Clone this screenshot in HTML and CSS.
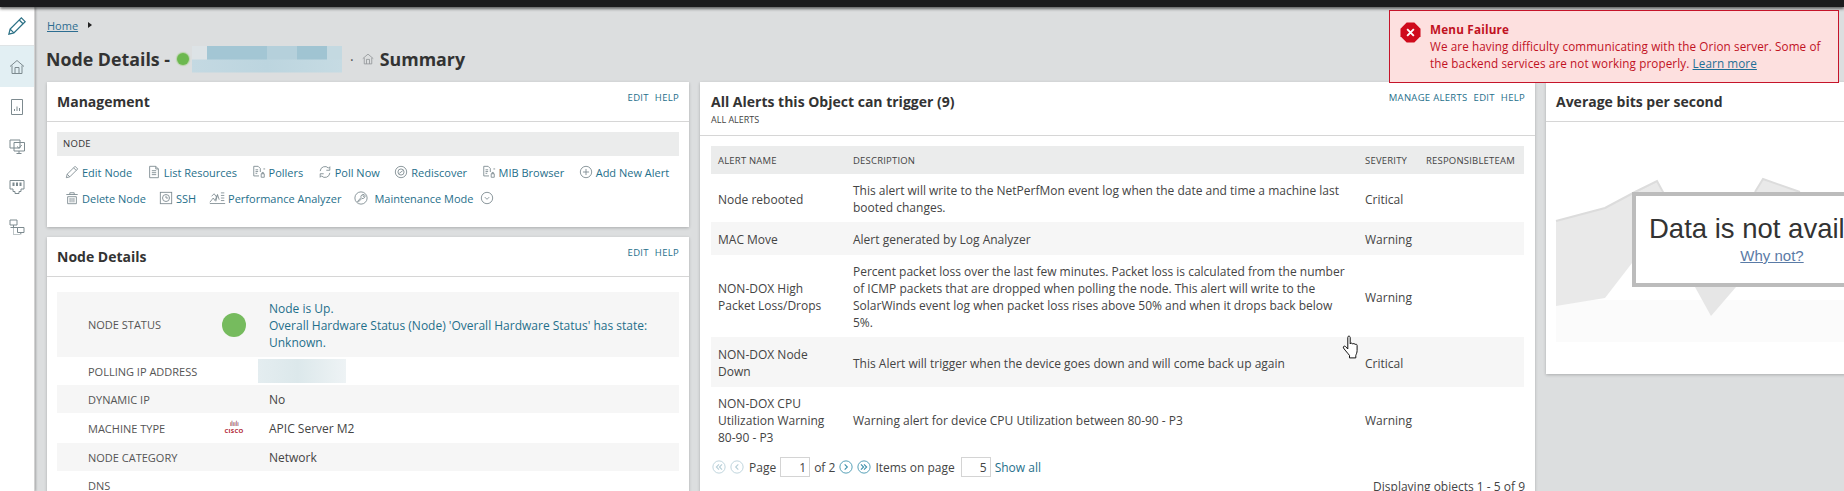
FILE: index.html
```html
<!DOCTYPE html>
<html lang="en">
<head>
<meta charset="utf-8">
<title>Node Details - Summary</title>
<link rel="stylesheet" href="styles.css">
</head>
<body>
<svg class="defs" width="0" height="0" aria-hidden="true">
  <symbol id="i-pencil" viewBox="0 0 16 16"><path d="M1.500 14.500l1-4L11.500 1.500l3 3-9 9z M9.800 3.200l3 3 M2.500 10.500l3 3" fill="none" stroke="currentColor"/></symbol>
  <symbol id="i-list" viewBox="0 0 16 16"><path d="M3 1.500h7l3 3v10H3z M5.500 6.500h5 M5.500 8.800h5 M5.500 11h5 M10 1.500v3h3" fill="none" stroke="currentColor"/></symbol>
  <symbol id="i-poller" viewBox="0 0 16 16"><path d="M8 12.500H2V1.500h5l2.500 2.500v4 M4 5.500h3 M4 7.500h3 M4 9.500h2 M10.500 10h3.500v4h-3.500z M11.500 10V8.500h1.500V10 M13 4.500h2" fill="none" stroke="currentColor"/></symbol>
  <symbol id="i-refresh" viewBox="0 0 16 16"><path d="M2.500 7A5.500 5.500 0 0 1 12 3.500L13.500 2v4h-4 M13.500 9A5.500 5.500 0 0 1 4 12.500L2.500 14v-4h4" fill="none" stroke="currentColor"/></symbol>
  <symbol id="i-disc" viewBox="0 0 16 16"><circle cx="8" cy="8" r="6.500" fill="none" stroke="currentColor"/><circle cx="8" cy="8" r="3.500" fill="none" stroke="currentColor"/><path d="M6 9.500l4-3" stroke="currentColor"/></symbol>
  <symbol id="i-plus" viewBox="0 0 16 16"><circle cx="8" cy="8" r="6.500" fill="none" stroke="currentColor"/><path d="M8 4.500v7 M4.500 8h7" stroke="currentColor"/></symbol>
  <symbol id="i-trash" viewBox="0 0 16 16"><path d="M1.500 4h13 M5.500 4V2h5v2 M3 6.500h10v8H3z M5.800 8v5 M8 8v5 M10.200 8v5" fill="none" stroke="currentColor"/></symbol>
  <symbol id="i-ssh" viewBox="0 0 16 16"><rect x="1.500" y="1.500" width="13" height="13" fill="none" stroke="currentColor"/><circle cx="8" cy="8" r="4" fill="none" stroke="currentColor"/><path d="M8 5.500V8h2.500" fill="none" stroke="currentColor"/></symbol>
  <symbol id="i-perf" viewBox="0 0 20 16"><path d="M1 14.500h18 M1 13l4-5 2 3 3-7 2 6 M14 2h4 M14 5h4 M14 8h4 M14 11h4 M3 6l3-3 3 4 M8 12l2-8" fill="none" stroke="currentColor"/></symbol>
  <symbol id="i-wrench" viewBox="0 0 16 16"><circle cx="8" cy="8" r="7" fill="none" stroke="currentColor"/><path d="M4 12l4-4.500a2.800 2.800 0 0 1 3.500-3.500L10 5.500l1 1 1.500-1.500A2.800 2.800 0 0 1 9 8.500L5 12.500z" fill="none" stroke="currentColor"/></symbol>
  <symbol id="i-chev" viewBox="0 0 16 16"><circle cx="8" cy="8" r="6.500" fill="none" stroke="currentColor"/><path d="M5.500 7l2.500 2.500L10.500 7" fill="none" stroke="currentColor"/></symbol>
  <symbol id="i-home" viewBox="0 0 16 16"><path d="M1 7.500L8 1.500l7 6 M3 6.500v8h10v-8 M6 14.500V8.500h4v6" fill="none" stroke="currentColor"/></symbol>
  <symbol id="i-report" viewBox="0 0 16 16"><path d="M2.500 .5h11v15h-11z M5.500 12V10 M8 12V7.500 M10.500 12V9" fill="none" stroke="currentColor"/></symbol>
  <symbol id="i-monitors" viewBox="0 0 16 16"><path d="M1 1h10v8H1z M5 3.500h10.500v8.500H5z M10 12v2.500 M7.500 14.500h5 M8 7.500l1.800 1.500 3-3" fill="#fff" stroke="currentColor"/></symbol>
  <symbol id="i-port" viewBox="0 0 16 16"><path d="M1 1.500h14v8.500h-3v2.500H10v2H6v-2H4V10H1z" fill="none" stroke="currentColor"/><path d="M4.500 3.500v3.500 M8 3.500v3.500 M11.500 3.500v3.500" stroke="currentColor" stroke-width="2"/></symbol>
  <symbol id="i-net" viewBox="0 0 16 16"><path d="M1 1h7v5H1z M8.500 8.500H15v5H8.500z M11.800 13.500v2 M4.500 6v2.500 M1.500 8.500h7" fill="none" stroke="currentColor"/><path d="M4.500 8.500v7h6" fill="none" stroke="currentColor" stroke-dasharray="1 1"/></symbol>
  <symbol id="i-first" viewBox="0 0 16 16"><circle cx="8" cy="8" r="7" fill="none" stroke="currentColor"/><path d="M8 5L5 8l3 3 M11.500 5l-3 3 3 3" fill="none" stroke="currentColor" stroke-width="1.300"/></symbol>
  <symbol id="i-prev" viewBox="0 0 16 16"><circle cx="8" cy="8" r="7" fill="none" stroke="currentColor"/><path d="M9.500 5l-3 3 3 3" fill="none" stroke="currentColor" stroke-width="1.300"/></symbol>
  <symbol id="i-next" viewBox="0 0 16 16"><circle cx="8" cy="8" r="7" fill="none" stroke="currentColor"/><path d="M6.500 5l3 3-3 3" fill="none" stroke="currentColor" stroke-width="1.300"/></symbol>
  <symbol id="i-last" viewBox="0 0 16 16"><circle cx="8" cy="8" r="7" fill="none" stroke="currentColor"/><path d="M4.500 5l3 3-3 3 M8 5l3 3-3 3" fill="none" stroke="currentColor" stroke-width="1.300"/></symbol>
</svg>

<div class="topbar"></div>
<div class="shell">
  <nav class="sidebar">
    <div class="side-item side-edit"><svg class="side-edit-icon"><use href="#i-pencil"/></svg></div>
    <div class="side-item side-active"><svg class="side-icon"><use href="#i-home"/></svg></div>
    <div class="side-item"><svg class="side-icon"><use href="#i-report"/></svg></div>
    <div class="side-item"><svg class="side-icon"><use href="#i-monitors"/></svg></div>
    <div class="side-item"><svg class="side-icon"><use href="#i-port"/></svg></div>
    <div class="side-item"><svg class="side-icon"><use href="#i-net"/></svg></div>
  </nav>

  <main class="main">
    <div class="crumbs"><a class="crumb-link">Home</a><span class="crumb-arrow"></span></div>
    <div class="page-head">
      <h1 class="page-title">
        <span>Node Details -</span>
        <span class="title-dot"></span>
        <span class="blur-name"></span>
        <span class="title-sep">·</span>
        <svg class="title-home"><use href="#i-home"/></svg>
        <span>Summary</span>
      </h1>
    </div>

    <div class="columns">
      <div class="col col-left">
        <section class="card">
          <header class="card-head">
            <h2 class="card-title">Management</h2>
            <div class="card-actions"><a>EDIT</a><a>HELP</a></div>
          </header>
          <div class="mgmt">
            <div class="mgmt-bar">NODE</div>
            <div class="mgmt-row mgmt-row-wide">
              <a class="act"><svg class="act-icon"><use href="#i-pencil"/></svg>Edit Node</a>
              <a class="act"><svg class="act-icon"><use href="#i-list"/></svg>List Resources</a>
              <a class="act"><svg class="act-icon"><use href="#i-poller"/></svg>Pollers</a>
              <a class="act"><svg class="act-icon"><use href="#i-refresh"/></svg>Poll Now</a>
              <a class="act"><svg class="act-icon"><use href="#i-disc"/></svg>Rediscover</a>
              <a class="act"><svg class="act-icon"><use href="#i-poller"/></svg>MIB Browser</a>
              <a class="act"><svg class="act-icon"><use href="#i-plus"/></svg>Add New Alert</a>
            </div>
            <div class="mgmt-row">
              <a class="act"><svg class="act-icon"><use href="#i-trash"/></svg>Delete Node</a>
              <a class="act"><svg class="act-icon"><use href="#i-ssh"/></svg>SSH</a>
              <a class="act"><svg class="act-icon act-icon-wide"><use href="#i-perf"/></svg>Performance Analyzer</a>
              <a class="act"><svg class="act-icon act-icon-gap"><use href="#i-wrench"/></svg>Maintenance Mode<svg class="act-icon act-chev"><use href="#i-chev"/></svg></a>
            </div>
          </div>
        </section>

        <section class="card">
          <header class="card-head card-head-details">
            <h2 class="card-title">Node Details</h2>
            <div class="card-actions"><a>EDIT</a><a>HELP</a></div>
          </header>
          <div class="details">
            <div class="d-row d-alt d-status">
              <div class="d-label">NODE STATUS</div>
              <div class="d-icon"><span class="status-dot"></span></div>
              <div class="d-value d-link">Node is Up.<br>Overall Hardware Status (Node) 'Overall Hardware Status' has state: Unknown.</div>
            </div>
            <div class="d-row d-ip">
              <div class="d-label">POLLING IP ADDRESS</div>
              <div class="d-icon"></div>
              <div class="blur-ip"></div>
            </div>
            <div class="d-row d-alt">
              <div class="d-label">DYNAMIC IP</div>
              <div class="d-icon"></div>
              <div class="d-value">No</div>
            </div>
            <div class="d-row d-tall">
              <div class="d-label">MACHINE TYPE</div>
              <div class="d-icon"><span class="cisco"><span class="cisco-bars">ılıılı</span><span class="cisco-word">CISCO</span></span></div>
              <div class="d-value">APIC Server M2</div>
            </div>
            <div class="d-row d-alt">
              <div class="d-label">NODE CATEGORY</div>
              <div class="d-icon"></div>
              <div class="d-value">Network</div>
            </div>
            <div class="d-row">
              <div class="d-label">DNS</div>
            </div>
          </div>
        </section>
      </div>

      <div class="col col-mid">
        <section class="card">
          <header class="card-head card-head-alerts">
            <div>
              <h2 class="card-title">All Alerts this Object can trigger (9)</h2>
              <div class="card-sub">ALL ALERTS</div>
            </div>
            <div class="card-actions"><a>MANAGE ALERTS</a><a>EDIT</a><a>HELP</a></div>
          </header>
          <div class="alerts">
            <table class="a-table">
              <colgroup><col class="c-name"><col class="c-desc"><col class="c-sev"><col class="c-team"></colgroup>
              <thead>
                <tr><th>ALERT NAME</th><th>DESCRIPTION</th><th>SEVERITY</th><th>RESPONSIBLETEAM</th></tr>
              </thead>
              <tbody>
                <tr><td>Node rebooted</td><td>This alert will write to the NetPerfMon event log when the date and time a machine last booted changes.</td><td>Critical</td><td></td></tr>
                <tr class="alt r-33"><td>MAC Move</td><td>Alert generated by Log Analyzer</td><td>Warning</td><td></td></tr>
                <tr><td>NON-DOX High Packet Loss/Drops</td><td>Percent packet loss over the last few minutes. Packet loss is calculated from the number of ICMP packets that are dropped when polling the node. This alert will write to the SolarWinds event log when packet loss rises above 50% and when it drops back below 5%.</td><td>Warning</td><td></td></tr>
                <tr class="alt r-50"><td>NON-DOX Node Down</td><td>This Alert will trigger when the device goes down and will come back up again</td><td>Critical</td><td></td></tr>
                <tr><td>NON-DOX CPU Utilization Warning 80-90 - P3</td><td>Warning alert for device CPU Utilization between 80-90 - P3</td><td>Warning</td><td></td></tr>
              </tbody>
            </table>
            <div class="pager">
              <svg class="pg-icon pg-off"><use href="#i-first"/></svg>
              <svg class="pg-icon pg-off"><use href="#i-prev"/></svg>
              <span class="pg-text">Page</span>
              <span class="pg-input">1</span>
              <span>of 2</span>
              <svg class="pg-icon"><use href="#i-next"/></svg>
              <svg class="pg-icon"><use href="#i-last"/></svg>
              <span class="pg-items">Items on page</span>
              <span class="pg-input">5</span>
              <a class="pg-all">Show all</a>
            </div>
            <div class="pg-summary">Displaying objects 1 - 5 of 9</div>
          </div>
        </section>
      </div>

      <div class="col col-right">
        <section class="card card-chart">
          <header class="card-head">
            <h2 class="card-title">Average bits per second</h2>
          </header>
          <div class="chart">
            <svg class="chart-svg" viewBox="1546 122 298 252" width="298" height="252">
              <rect x="1556" y="300" width="288" height="42" fill="#fbfbfb"/>
              <polygon points="1556,221 1605,208 1635,192 1657,181 1670,210 1660,250 1632,263 1605,298 1556,306" fill="#e9e9e9"/>
              <polyline points="1556,221 1605,208 1635,192 1657,181 1664,194" fill="none" stroke="#dcdcdc" stroke-width="2"/>
              <polygon points="1695,287 1711,316 1736,287" fill="#e6e6e6"/>
              <polygon points="1755,192 1763,179 1800,192" fill="#e9e9e9"/>
              <polyline points="1755,192 1763,179 1800,192" fill="none" stroke="#dcdcdc" stroke-width="2"/>
            </svg>
            <div class="no-data">
              <div class="no-data-text">Data is not available</div>
              <a class="no-data-link">Why not?</a>
            </div>
          </div>
        </section>
      </div>
    </div>
  </main>
</div>

<aside class="failure">
  <svg class="failure-icon" viewBox="0 0 22 22"><polygon points="7,0.500 15,0.500 21.500,7 21.500,15 15,21.500 7,21.500 0.500,15 0.500,7" fill="#cf0a1c"/><path d="M7.500 7.500l7 7 M14.500 7.500l-7 7" stroke="#fff" stroke-width="2"/></svg>
  <div class="failure-body">
    <div class="failure-title">Menu Failure</div>
    <div>We are having difficulty communicating with the Orion server. Some of the backend services are not working properly. <a class="failure-link">Learn more</a></div>
  </div>
</aside>

<svg class="cursor" viewBox="0 0 18 24" width="18" height="24"><path d="M6 1.500c1-.8 2.200-.2 2.200 1V9c.3-1.200 2.300-1.200 2.500.2.400-1 2.200-.9 2.400.4.600-.7 2-.4 2 .8v5c0 2.500-.8 3.500-1.300 5v2.500H7.500v-2.500C6 18.500 3.500 15.800 1.500 13c-.8-1.300.8-2.500 2-1.500L5.800 14V2.500z" fill="#fff" stroke="#111" stroke-width="1"/></svg>
</body>
</html>
```

FILE: styles.css
```css
* { box-sizing: border-box; }
html, body { margin: 0; height: 491px; overflow: hidden; }
body {
  position: relative;
  display: flex;
  flex-direction: column;
  background: #dcdedf;
  color: #333;
  font-family: "Open Sans", "Liberation Sans", sans-serif;
  font-size: 11px;
}
a { color: #1f6f8b; }
.defs { position: absolute; }

.topbar {
  height: 7px;
  flex: none;
  background: #1b1b1d;
  box-shadow: 0 2px 3px rgba(0,0,0,.55);
  position: relative;
  z-index: 3;
}
.shell { flex: 1; display: flex; min-height: 0; }

.sidebar {
  width: 35px;
  flex: none;
  background: #fff;
  box-shadow: 1px 0 2px rgba(0,0,0,.25);
  border-right: 1px solid #d2d2d2;
  position: relative;
  z-index: 1;
}
.side-item { height: 40px; display: flex; align-items: center; justify-content: center; color: #7d8a8f; }
.side-edit { height: 39px; border-bottom: 1px solid #dfe4e6; color: #2c7186; }
.side-active { height: 41px; background: #e2eff3; }
.side-icon { width: 16px; height: 16px; }
.side-edit-icon { width: 20px; height: 20px; }

.main { flex: 1; min-width: 0; padding-left: 12px; overflow: hidden; }
.crumbs { display: flex; align-items: center; height: 14px; margin-top: 11px; font-size: 11px; }
.crumb-link { color: #2d6d91; text-decoration: underline; }
.crumb-arrow {
  margin-left: 10px;
  border-left: 4px solid #222;
  border-top: 3px solid transparent;
  border-bottom: 3px solid transparent;
}
.page-head { display: flex; margin: 13px 0 9px -1px; }
.page-title {
  display: flex;
  align-items: center;
  height: 28px;
  margin: 0;
  font-size: 17.800px;
  font-weight: 700;
  color: #333;
  white-space: nowrap;
}
.title-dot {
  width: 12px;
  height: 12px;
  margin: 0 3px 0 7px;
  border-radius: 50%;
  background: #6cb84f;
  box-shadow: 0 0 1px 1px #b5d3a5;
}
.blur-name {
  width: 150px;
  height: 27px;
  background:
    linear-gradient(90deg, #dde3e6 0 10%, #a3c6d4 10% 50%, #b5d0db 50% 70%, #a0c4d2 70% 90%, #c4d9e1 90%) top / 100% 50% no-repeat,
    linear-gradient(90deg, #c4d9e2, #bcd5df 50%, #c6dbe3) bottom / 100% 50% no-repeat;
}
.title-sep { margin: 0 8px 0 8px; font-size: 14px; font-weight: 400; color: #555; }
.title-home { width: 12px; height: 12px; margin-right: 6px; color: #8b8f92; }

.columns { display: flex; gap: 11px; align-items: flex-start; }
.col { flex: none; display: flex; flex-direction: column; gap: 10px; }
.col-left { width: 642px; }
.col-mid { width: 835px; }
.col-right { width: 300px; }

.card { background: #fff; box-shadow: 0 1px 3px rgba(0,0,0,.22); }
.card-head {
  display: flex;
  justify-content: space-between;
  height: 40px;
  padding: 10px 10px 0;
  border-bottom: 1px solid #d6d6d6;
}
.card-head-details { height: 40px; }
.card-head-alerts { height: 54px; padding-top: 10px; padding-left: 11px; }
.card-title { margin: 0; font-size: 14px; line-height: 19px; font-weight: 700; color: #333; }
.card-sub { font-size: 9px; line-height: 13px; margin-top: 2px; color: #444; }
.card-actions { display: flex; gap: 6px; font-size: 9.500px; letter-spacing: .3px; line-height: 12px; }

.mgmt { height: 105px; padding: 10px 10px 0; }
.mgmt-bar {
  height: 24px;
  line-height: 24px;
  padding-left: 6px;
  background: #ebecec;
  font-size: 9.500px;
  letter-spacing: .3px;
}
.mgmt-row { display: flex; gap: 13px; height: 26px; align-items: center; padding-left: 8px; font-size: 11px; }
.mgmt-row-wide { gap: 14.500px; margin-top: 3px; }
.act { display: inline-flex; align-items: center; color: #1f6f8b; white-space: nowrap; }
.act-icon { width: 14px; height: 14px; margin-right: 3px; color: #7d8a90; flex: none; }
.act-icon-wide { width: 17px; margin-right: 2px; }
.act-icon-gap { margin-right: 6px; }
.act-chev { margin: 0 0 0 7px; }

.details { padding: 15px 10px 0; font-size: 12px; color: #444; }
.d-row { display: flex; align-items: center; min-height: 28px; }
.d-alt { background: #f6f6f6; }
.d-status { height: 65px; }
.d-tall { height: 30px; }
.d-label { width: 165px; flex: none; padding-left: 31px; font-size: 11px; color: #555; }
.d-icon { width: 24px; flex: none; margin-right: 23px; display: flex; justify-content: center; align-items: center; }
.d-value { flex: 1; padding-right: 20px; line-height: 17px; }
.d-link { color: #1f6f8b; padding-top: 2px; }
.status-dot { width: 24px; height: 24px; border-radius: 50%; background: #76bb5e; }
.d-ip { position: relative; }
.blur-ip {
  width: 88px;
  height: 24px;
  margin-left: -11px;
  background: linear-gradient(90deg, #e4edf0, #dce8eb 45%, #eef3f5);
}
.cisco { display: flex; flex-direction: column; align-items: center; line-height: 1; color: #b01b2e; }
.cisco-bars { font-size: 7px; letter-spacing: -.5px; color: #8c3a4a; height: 7px; line-height: 7px; font-family: "DejaVu Sans", sans-serif; }
.cisco-word { font-size: 6px; font-weight: 700; letter-spacing: .3px; line-height: 7px; }

.alerts { padding: 10px 10px 0 11px; }
.a-table { width: 813px; table-layout: fixed; border-collapse: collapse; font-size: 12px; color: #444; }
.c-name { width: 135px; }
.c-desc { width: 512px; }
.c-sev { width: 61px; }
.c-team { width: 105px; }
.a-table th {
  height: 28px;
  padding: 0 0 0 7px;
  background: #ebecec;
  text-align: left;
  font-size: 9.500px;
  font-weight: 400;
  letter-spacing: .2px;
  white-space: nowrap;
  color: #444;
}
.a-table td { padding: 8px 7px 6px; line-height: 17px; vertical-align: middle; }
.a-table td:nth-child(2) { padding-right: 13px; }
.a-table .alt td { background: #f6f6f6; }
.r-33 { height: 33px; }
.r-50 { height: 50px; }

.pager { display: flex; align-items: center; height: 20px; margin-top: 5px; font-size: 12px; color: #444; gap: 4px; padding-left: 1px; }
.pg-icon { width: 14px; height: 14px; color: #3f92ad; flex: none; }
.pg-off { color: #b7cfd8; }
.pg-text { margin-left: 1px; }
.pg-input {
  display: block;
  width: 30px;
  height: 20px;
  line-height: 19px;
  padding-right: 3px;
  text-align: right;
  border: 1px solid #d4d4d4;
  background: #fff;
}
.pg-items { margin-right: 2px; }
.pg-all { color: #1f6f8b; }
.pg-summary { text-align: right; margin-top: 2px; line-height: 15px; font-size: 12px; color: #444; }

.card-chart { position: relative; height: 292px; overflow: hidden; }
.chart { position: relative; height: 252px; }
.chart-svg { display: block; }
.no-data {
  position: absolute;
  left: 86px;
  top: 70px;
  width: 280px;
  height: 95px;
  padding-top: 18px;
  background: #fff;
  border: 4px solid #bcbcbc;
  text-align: center;
  font-family: "Liberation Sans", sans-serif;
}
.no-data-text { font-size: 27.500px; line-height: 30px; color: #333; white-space: nowrap; text-align: left; padding-left: 13px; }
.no-data-link { display: block; margin-top: 3px; font-size: 15px; line-height: 17px; color: #5a7ba6; text-decoration: underline; }

.failure {
  position: absolute;
  left: 1389px;
  top: 10px;
  z-index: 5;
  display: flex;
  width: 450px;
  height: 73px;
  padding: 10px 0 0 10px;
  background: #fde0df;
  border: 1px solid #c5142a;
  color: #c1121f;
  font-size: 11.700px;
  line-height: 17px;
  letter-spacing: .1px;
}
.failure-icon { width: 21px; height: 21px; flex: none; margin-right: 9px; margin-top: 1px; }
.failure-body { width: 405px; }
.failure-title { font-weight: 700; letter-spacing: .2px; }
.failure-link { color: #1f6f96; text-decoration: underline; }

.cursor { position: absolute; left: 1342px; top: 335px; z-index: 4; }
```
